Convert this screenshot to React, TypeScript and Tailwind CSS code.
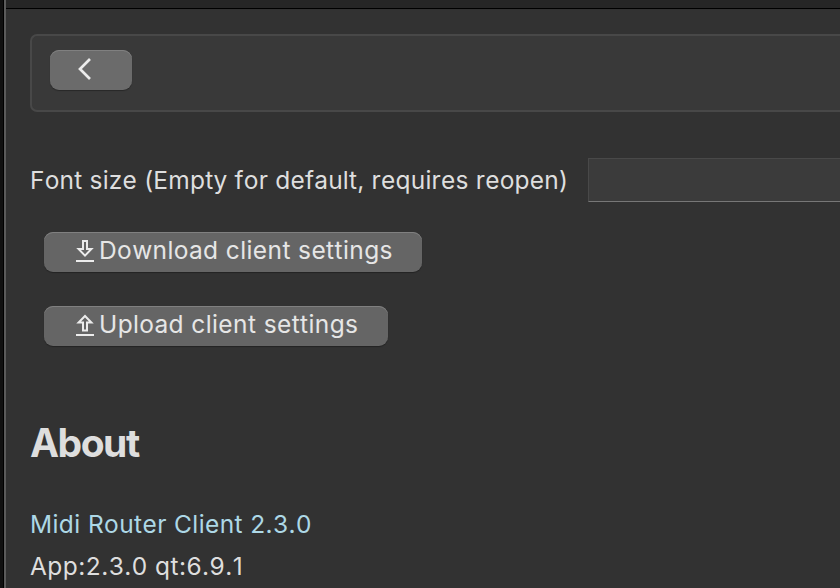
import type { ReactNode } from "react";

const buttonSurface =
  "flex h-10 items-center rounded-[9px] shadow-[inset_0_1px_0_#808080,0_1px_1px_rgba(0,0,0,0.3)]";

function DownloadIcon() {
  return (
    <svg width="18" height="22" viewBox="0 0 18 22" fill="none" stroke="#ececec">
      <path d="M7 1h4v8h4.4L9 15.6 2.6 9H7z" strokeWidth="2" />
      <path d="M0 21h18" strokeWidth="2" />
    </svg>
  );
}

function UploadIcon() {
  return (
    <svg width="18" height="22" viewBox="0 0 18 22" fill="none" stroke="#ececec">
      <path d="M7 16.6h4V8.6h4.4L9 2 2.6 8.6H7z" strokeWidth="2" />
      <path d="M0 21h18" strokeWidth="2" />
    </svg>
  );
}

function ActionButton({ width, icon, label }: { width: string; icon: ReactNode; label: string }) {
  return (
    <button className={`${buttonSurface} ${width} bg-[#656565] pb-[3px] pl-8 text-[#e6e6e6]`}>
      <span className="mr-[5px] shrink-0">{icon}</span>
      <span className="whitespace-nowrap pb-px leading-none tracking-[0.4px]">{label}</span>
    </button>
  );
}

export default function App() {
  return (
    <div className="flex h-[588px] w-[840px] overflow-hidden bg-[#323232] font-['Inter',sans-serif] text-[24.5px] text-[#dedede] [font-kerning:none]">
      <div className="w-1 shrink-0 border-r border-black bg-[#111111]" />
      <div className="w-0.5 shrink-0 bg-[#5b5b5b]" />
      <main className="flex min-w-0 flex-1 flex-col">
        <div className="h-[9px] shrink-0 border-b border-black bg-[#262626]" />
        <div className="ml-6 mt-[25px] flex h-[78px] shrink-0 rounded-l-[7px] border-2 border-r-0 border-[#484848] bg-[#393939] pl-[18px] pt-[14px]">
          <button aria-label="Back" className={`${buttonSurface} w-[82px] bg-[#6b6b6b] pb-[2px] pl-7`}>
            <svg width="14" height="22" viewBox="0 0 14 22" fill="none" stroke="#ececec" strokeWidth="2.7">
              <path d="M12 1 2 11l10 10" />
            </svg>
          </button>
        </div>
        <div className="ml-6 mt-[46px] flex h-11 shrink-0 items-center">
          <label htmlFor="font-size" className="w-[558px] shrink-0 whitespace-nowrap tracking-[0.21px]">
            Font size (Empty for default, requires reopen)
          </label>
          <input id="font-size" className="h-11 min-w-0 flex-1 border border-r-0 border-[#494949] border-b-[#777777] bg-[#3b3b3b] outline-none" />
        </div>
        <div className="ml-[38px] mt-[30px] flex shrink-0 flex-col gap-[34px]">
          <ActionButton width="w-[378px]" icon={<DownloadIcon />} label="Download client settings" />
          <ActionButton width="w-[344px]" icon={<UploadIcon />} label="Upload client settings" />
        </div>
        <h2 className="ml-6 mt-[73px] text-[39px] font-bold leading-[48px] tracking-[-1.5px]">About</h2>
        <a className="ml-6 mt-9 leading-[42px] tracking-[0.4px] text-[#add8e6]">Midi Router Client 2.3.0</a>
        <p className="ml-6 leading-[42px] tracking-[0.45px]">App:2.3.0 qt:6.9.1</p>
      </main>
    </div>
  );
}
